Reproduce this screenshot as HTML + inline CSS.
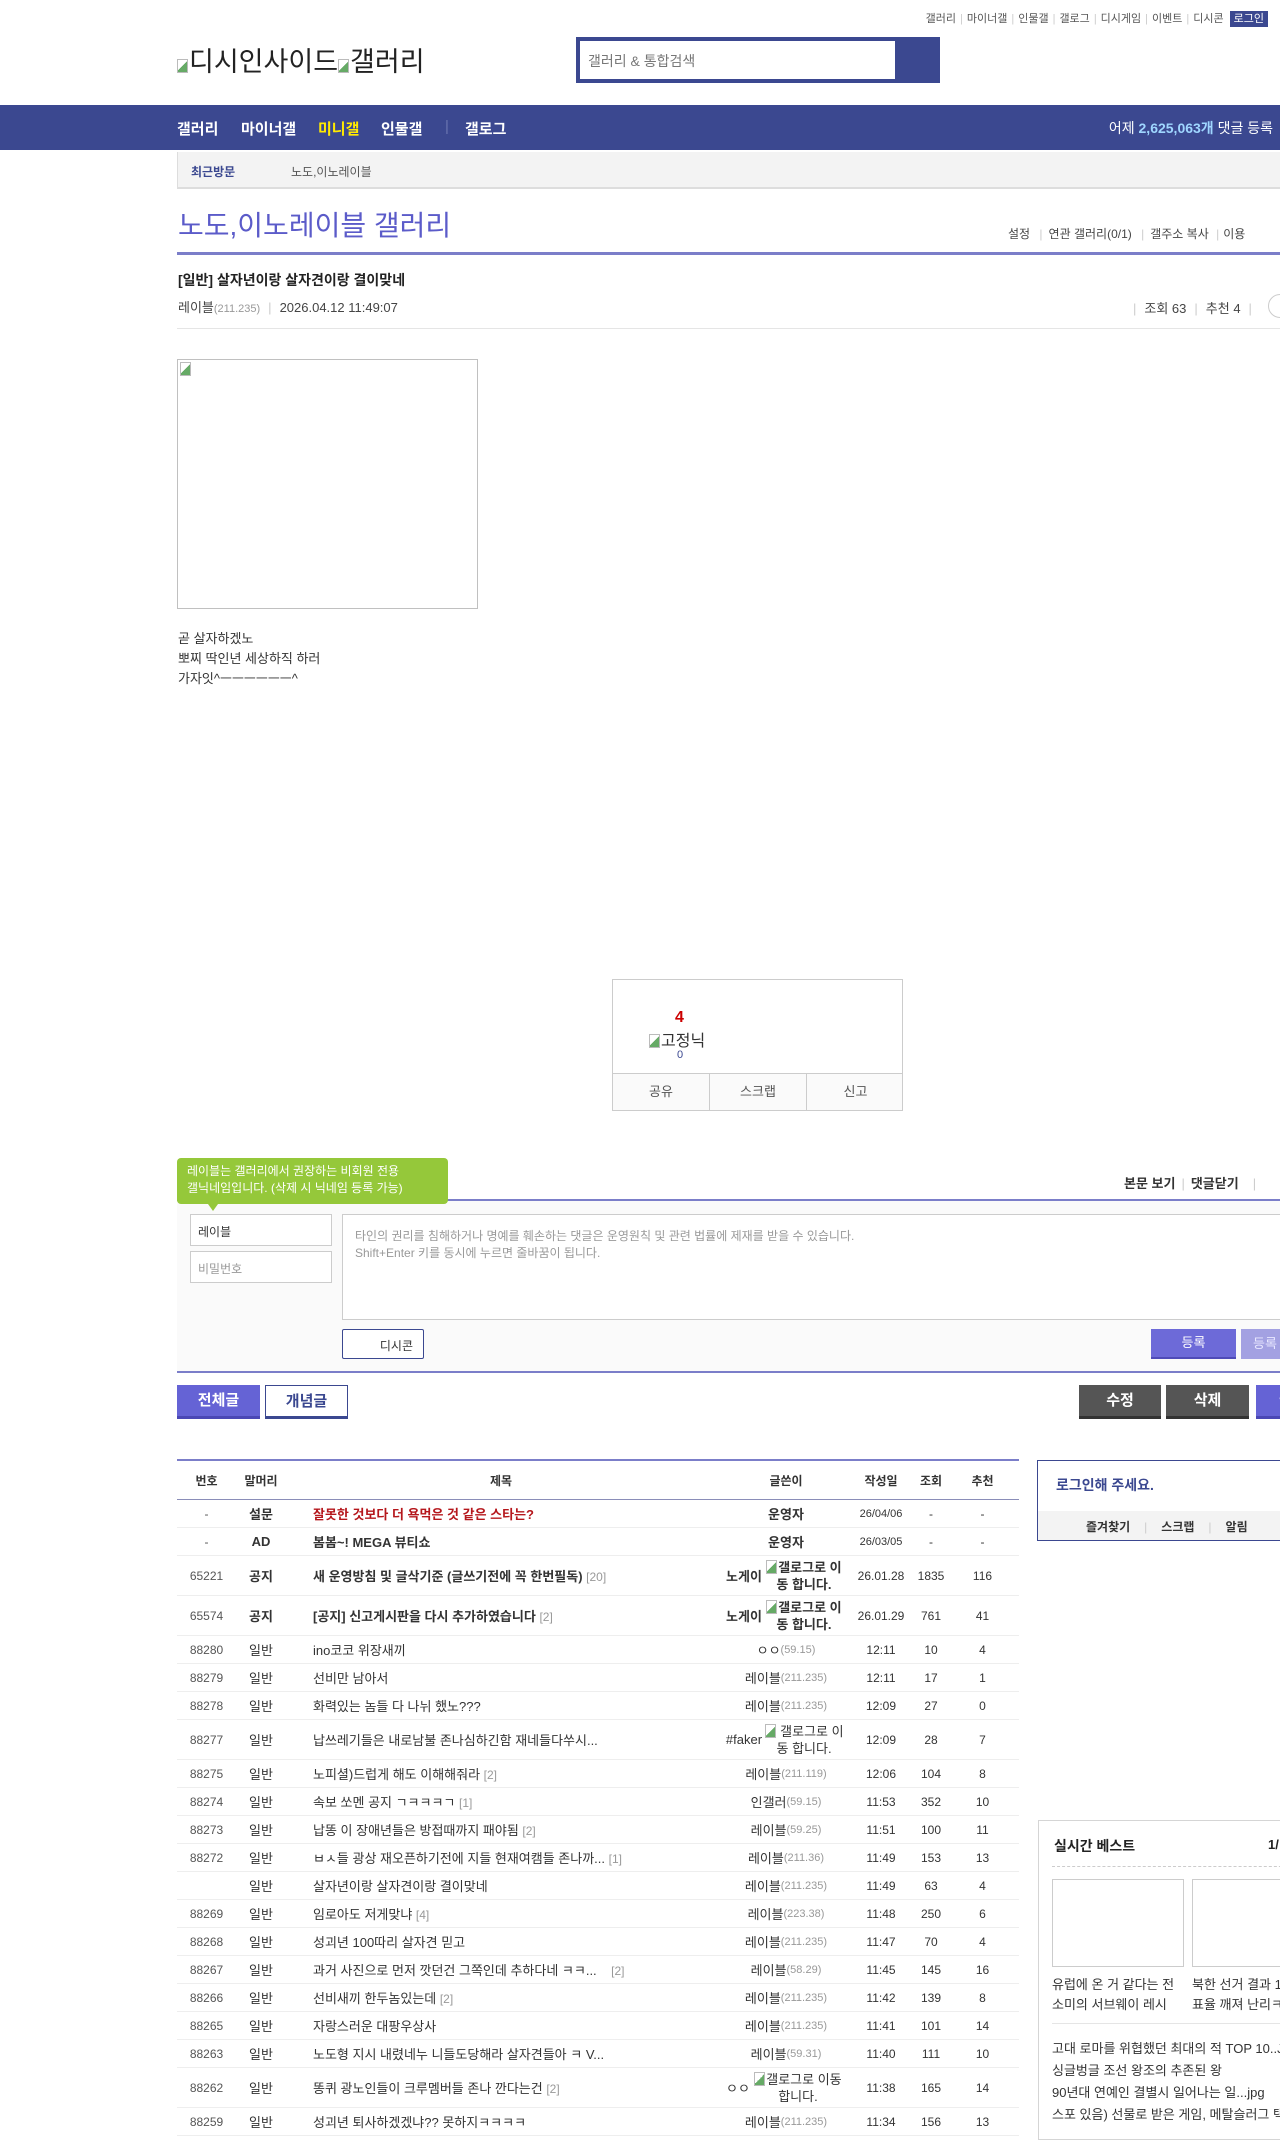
<!DOCTYPE html>
<html><head><meta charset="utf-8">
<style>
*{margin:0;padding:0;box-sizing:border-box}
body{width:1280px;height:2123px;overflow:hidden;position:relative;background:#fff;font-family:"Liberation Sans","Noto Sans CJK KR",sans-serif;color:#333;font-size:13px}
.a{position:absolute;white-space:nowrap}
.toplinks{top:10px;right:12px;font-size:11px;color:#555}
.toplinks span.s{color:#ccc;margin:0 4px}
.login{background:#3b4890;color:#fff;padding:2px 4px;margin-left:6px}
.nav{top:105px;left:0;width:1280px;height:45px;background:#3b4890}
.nav .i{position:absolute;top:13px;color:#fff;font-weight:bold;font-size:15px}
.recent{top:152px;left:177px;width:1110px;height:37px;background:#f3f3f3;border-bottom:2px solid #ddd;border-left:1px solid #ddd}
.bi{display:inline-block;width:11px;height:14px;border:1px solid #bbb;background:linear-gradient(135deg,#fff 50%,#6a6 50%);vertical-align:-2px;margin-right:1px}
.row{position:absolute;left:177px;width:842px;border-bottom:1px solid #eee;display:flex;align-items:center;font-size:13px;color:#333}
.row div{text-align:center;white-space:nowrap}
.c1{width:59px;font-size:12px;color:#555}.c2{width:50px}.c3{width:430px;text-align:left!important;padding-left:27px;overflow:hidden}
.c4{width:140px;display:flex;justify-content:center;align-items:center}.c5{width:50px;font-size:12px}.c6{width:50px;font-size:12px}.c7{width:53px;font-size:12px}
.ip{color:#999;font-size:11px}
.rc{color:#999;font-size:12px}
.gl{display:inline-block;white-space:normal!important;width:84px;line-height:17px;font-size:13px;text-align:center}
.btn{position:absolute;height:34px;line-height:32px;text-align:center;font-size:15px;font-weight:bold}
</style></head><body>

<div class="a toplinks">갤러리<span class="s">|</span>마이너갤<span class="s">|</span>인물갤<span class="s">|</span>갤로그<span class="s">|</span>디시게임<span class="s">|</span>이벤트<span class="s">|</span>디시콘<span class="login">로그인</span></div>
<div class="a" style="left:177px;top:40px;font-size:27px;color:#222"><span class="bi"></span>디시인사이드<span class="bi"></span>갤러리</div>
<div class="a" style="left:576px;top:37px;width:364px;height:46px;background:#3b4890"></div>
<div class="a" style="left:580px;top:41px;width:315px;height:38px;background:#fff;font-size:14px;color:#777;padding:10px 8px">갤러리 &amp; 통합검색</div>

<div class="a nav">
<span class="i" style="left:177px">갤러리</span>
<span class="i" style="left:241px">마이너갤</span>
<span class="i" style="left:318px;color:#ffea00">미니갤</span>
<span class="i" style="left:381px">인물갤</span>
<span class="i" style="left:445px;color:#6a75b0;font-weight:normal">|</span>
<span class="i" style="left:465px">갤로그</span>
<span class="i" style="right:7px;font-weight:normal;font-size:14px">어제 <b style="color:#9fd6ff">2,625,063개</b> 댓글 등록</span>
</div>
<div class="a recent">
<span class="a" style="left:13px;top:11px;font-size:12px;color:#3b4890;font-weight:bold">최근방문</span>
<span class="a" style="left:113px;top:11px;font-size:12px;color:#555">노도,이노레이블</span>
</div>

<div class="a" style="left:178px;top:204px;font-size:28px;color:#5b5bc9">노도,이노레이블 갤러리</div>
<div class="a" style="left:1008px;top:225px;font-size:12px;color:#444">설정 <span style="color:#ccc;margin:0 6px">|</span>연관 갤러리(0/1) <span style="color:#ccc;margin:0 6px">|</span>갤주소 복사 <span style="color:#ccc;margin:0 4px">|</span>이용</div>
<div class="a" style="left:177px;top:252px;width:1110px;height:3px;background:#7b7ec9"></div>

<div class="a" style="left:178px;top:270px;font-size:14px;font-weight:bold;color:#222">[일반] 살자년이랑 살자견이랑 결이맞네</div>
<div class="a" style="left:178px;top:297px;font-size:13px;color:#444">레이블<span class="ip">(211.235)</span><span style="color:#ccc;margin:0 8px">|</span>2026.04.12 11:49:07</div>
<div class="a" style="left:1133px;top:298px;font-size:13px;color:#444"><span style="color:#ccc;margin-right:8px">|</span>조회 63<span style="color:#ccc;margin:0 8px">|</span>추천 4<span style="color:#ccc;margin-left:8px">|</span></div>
<div class="a" style="left:1268px;top:294px;width:24px;height:24px;border:1px solid #ccc;border-radius:12px"></div>
<div class="a" style="left:177px;top:328px;width:1110px;height:1px;background:#e5e5e5"></div>

<div class="a" style="left:177px;top:359px;width:301px;height:250px;border:1px solid #c0c0c0"><span class="bi" style="position:absolute;left:2px;top:2px"></span></div>
<div class="a" style="left:178px;top:629px;font-size:13px;line-height:20px;color:#333">곧 살자하겠노<br>뽀찌 딱인년 세상하직 하러<br>가자잇^ㅡㅡㅡㅡㅡㅡ^</div>

<div class="a" style="left:612px;top:979px;width:291px;height:132px;border:1px solid #ccc"></div>
<div class="a" style="left:612px;top:1073px;width:291px;height:38px;border:1px solid #ccc;background:#fafafa;font-size:13px;color:#555">
<span class="a" style="left:0;top:0;width:97px;height:36px;border-right:1px solid #ccc;text-align:center;line-height:36px">공유</span>
<span class="a" style="left:97px;top:0;width:97px;height:36px;border-right:1px solid #ccc;text-align:center;line-height:36px">스크랩</span>
<span class="a" style="left:194px;top:0;width:97px;text-align:center;line-height:36px">신고</span></div>
<div class="a" style="left:675px;top:1009px;font-size:16px;font-weight:bold;color:#c00">4</div>
<div class="a" style="left:649px;top:1027px;font-size:16px;color:#333"><span class="bi"></span>고정닉</div>
<div class="a" style="left:677px;top:1049px;font-size:11px;color:#3b4890">0</div>

<div class="a" style="left:297px;top:1168px;font-size:16px;font-weight:bold;color:#333">전체 댓글 0개 등록순</div>
<div class="a" style="left:1124px;top:1173px;font-size:13px;font-weight:bold;color:#333">본문 보기<span style="color:#ccc;margin:0 6px;font-weight:normal">|</span>댓글닫기<span style="color:#ccc;margin-left:14px;font-weight:normal">|</span></div>
<div class="a" style="left:177px;top:1199px;width:1110px;height:2px;background:#7b7ec9"></div>
<div class="a" style="left:177px;top:1201px;width:1110px;height:170px;background:#fafafa"></div>
<div class="a" style="left:177px;top:1158px;width:271px;height:46px;background:#95c83a;border-radius:4px;color:#fff;font-size:12px;line-height:17px;padding:5px 10px">레이블는 갤러리에서 권장하는 비회원 전용<br>갤닉네임입니다. (삭제 시 닉네임 등록 가능)</div>
<div class="a" style="left:208px;top:1204px;width:0;height:0;border-left:5px solid transparent;border-right:5px solid transparent;border-top:7px solid #95c83a"></div>
<div class="a" style="left:190px;top:1214px;width:142px;height:32px;border:1px solid #ccc;background:#fff;font-size:12px;color:#333;padding:8px 7px">레이블</div>
<div class="a" style="left:190px;top:1251px;width:142px;height:32px;border:1px solid #ccc;background:#fff;font-size:12px;color:#999;padding:8px 7px">비밀번호</div>
<div class="a" style="left:342px;top:1214px;width:950px;height:106px;border:1px solid #ccc;background:#fff;font-size:12px;color:#999;line-height:17px;padding:13px 12px">타인의 권리를 침해하거나 명예를 훼손하는 댓글은 운영원칙 및 관련 법률에 제재를 받을 수 있습니다.<br>Shift+Enter 키를 동시에 누르면 줄바꿈이 됩니다.</div>
<div class="a" style="left:342px;top:1329px;width:82px;height:30px;border:1px solid #3b4890;background:#fff;font-size:12px;color:#333;text-align:right;padding:7px 10px;border-radius:2px">디시콘</div>
<div class="a" style="left:1151px;top:1329px;width:85px;height:30px;background:#6d6ad8;border-bottom:2px solid #4f4bb8;color:#fff;font-size:13px;text-align:center;line-height:28px">등록</div>
<div class="a" style="left:1241px;top:1329px;width:60px;height:30px;background:#a3a1e2;color:#e8e8ff;font-size:13px;padding-left:12px;line-height:29px">등록</div>
<div class="a" style="left:177px;top:1371px;width:1110px;height:2px;background:#7b7ec9"></div>

<div class="btn" style="left:177px;top:1385px;width:83px;background:#6563d5;color:#fff;border-bottom:3px solid #4a47b5">전체글</div>
<div class="btn" style="left:265px;top:1385px;width:83px;background:#fff;color:#3b4890;border:1px solid #3b4890;border-bottom:3px solid #3b4890">개념글</div>
<div class="btn" style="left:1079px;top:1385px;width:82px;background:#555;color:#fff;border-bottom:3px solid #333">수정</div>
<div class="btn" style="left:1166px;top:1385px;width:83px;background:#555;color:#fff;border-bottom:3px solid #333">삭제</div>
<div class="btn" style="left:1256px;top:1385px;width:60px;background:#6563d5;color:#fff;border-bottom:3px solid #4a47b5">글</div>

<div class="a" style="left:177px;top:1459px;width:842px;height:2px;background:#7b7ec9"></div>
<div class="row" style="top:1461px;height:39px;border-bottom:1px solid #8a8db8;font-weight:bold;font-size:12px"><div class="c1" style="color:#333">번호</div><div class="c2">말머리</div><div class="c3" style="text-align:center!important;padding-left:0">제목</div><div class="c4">글쓴이</div><div class="c5">작성일</div><div class="c6">조회</div><div class="c7">추천</div></div>

<div class="row" style="top:1500px;height:28px"><div class="c1">-</div><div class="c2"><b>설문</b></div><div class="c3"><b style="color:#b5171c">잘못한 것보다 더 욕먹은 것 같은 스타는?</b></div><div class="c4"><b>운영자</b></div><div class="c5" style="font-size:11px">26/04/06</div><div class="c6">-</div><div class="c7">-</div></div>
<div class="row" style="top:1528px;height:28px"><div class="c1">-</div><div class="c2"><b>AD</b></div><div class="c3"><b>봄봄~! MEGA 뷰티쇼</b></div><div class="c4"><b>운영자</b></div><div class="c5" style="font-size:11px">26/03/05</div><div class="c6">-</div><div class="c7">-</div></div>
<div class="row" style="top:1556px;height:40px"><div class="c1">65221</div><div class="c2"><b>공지</b></div><div class="c3"><b>새 운영방침 및 글삭기준 (글쓰기전에 꼭 한번필독)</b> <span class="rc">[20]</span></div><div class="c4"><b>노게이</b><span class="gl"><b><span class="bi"></span>갤로그로 이동 합니다.</b></span></div><div class="c5">26.01.28</div><div class="c6">1835</div><div class="c7">116</div></div>
<div class="row" style="top:1596px;height:40px"><div class="c1">65574</div><div class="c2"><b>공지</b></div><div class="c3"><b>[공지] 신고게시판을 다시 추가하였습니다</b> <span class="rc">[2]</span></div><div class="c4"><b>노게이</b><span class="gl"><b><span class="bi"></span>갤로그로 이동 합니다.</b></span></div><div class="c5">26.01.29</div><div class="c6">761</div><div class="c7">41</div></div>
<div class="row" style="top:1636px;height:28px"><div class="c1">88280</div><div class="c2">일반</div><div class="c3">ino코코 위장새끼</div><div class="c4">ㅇㅇ <span class="ip">(59.15)</span></div><div class="c5">12:11</div><div class="c6">10</div><div class="c7">4</div></div>
<div class="row" style="top:1664px;height:28px"><div class="c1">88279</div><div class="c2">일반</div><div class="c3">선비만 남아서</div><div class="c4">레이블 <span class="ip">(211.235)</span></div><div class="c5">12:11</div><div class="c6">17</div><div class="c7">1</div></div>
<div class="row" style="top:1692px;height:28px"><div class="c1">88278</div><div class="c2">일반</div><div class="c3">화력있는 놈들 다 나뉘 했노???</div><div class="c4">레이블 <span class="ip">(211.235)</span></div><div class="c5">12:09</div><div class="c6">27</div><div class="c7">0</div></div>
<div class="row" style="top:1720px;height:40px"><div class="c1">88277</div><div class="c2">일반</div><div class="c3">납쓰레기들은 내로남불 존나심하긴함 재네들다쑤시...</div><div class="c4">#faker<span class="gl"><span class="bi"></span> 갤로그로 이동 합니다.</span></div><div class="c5">12:09</div><div class="c6">28</div><div class="c7">7</div></div>
<div class="row" style="top:1760px;height:28px"><div class="c1">88275</div><div class="c2">일반</div><div class="c3">노피셜)드럽게 해도 이해해줘라 <span class="rc">[2]</span></div><div class="c4">레이블 <span class="ip">(211.119)</span></div><div class="c5">12:06</div><div class="c6">104</div><div class="c7">8</div></div>
<div class="row" style="top:1788px;height:28px"><div class="c1">88274</div><div class="c2">일반</div><div class="c3">속보 쏘멘 공지 ㄱㅋㅋㅋㄱ <span class="rc">[1]</span></div><div class="c4">인갤러 <span class="ip">(59.15)</span></div><div class="c5">11:53</div><div class="c6">352</div><div class="c7">10</div></div>
<div class="row" style="top:1816px;height:28px"><div class="c1">88273</div><div class="c2">일반</div><div class="c3">납똥 이 장애년들은 방접때까지 패야됨 <span class="rc">[2]</span></div><div class="c4">레이블 <span class="ip">(59.25)</span></div><div class="c5">11:51</div><div class="c6">100</div><div class="c7">11</div></div>
<div class="row" style="top:1844px;height:28px"><div class="c1">88272</div><div class="c2">일반</div><div class="c3">ㅂㅅ들 광상 재오픈하기전에 지들 현재여캠들 존나까... <span class="rc">[1]</span></div><div class="c4">레이블 <span class="ip">(211.36)</span></div><div class="c5">11:49</div><div class="c6">153</div><div class="c7">13</div></div>
<div class="row" style="top:1872px;height:28px"><div class="c1"></div><div class="c2">일반</div><div class="c3">살자년이랑 살자견이랑 결이맞네</div><div class="c4">레이블 <span class="ip">(211.235)</span></div><div class="c5">11:49</div><div class="c6">63</div><div class="c7">4</div></div>
<div class="row" style="top:1900px;height:28px"><div class="c1">88269</div><div class="c2">일반</div><div class="c3">임로아도 저게맞냐 <span class="rc">[4]</span></div><div class="c4">레이블 <span class="ip">(223.38)</span></div><div class="c5">11:48</div><div class="c6">250</div><div class="c7">6</div></div>
<div class="row" style="top:1928px;height:28px"><div class="c1">88268</div><div class="c2">일반</div><div class="c3">성괴년 100따리 살자견 믿고</div><div class="c4">레이블 <span class="ip">(211.235)</span></div><div class="c5">11:47</div><div class="c6">70</div><div class="c7">4</div></div>
<div class="row" style="top:1956px;height:28px"><div class="c1">88267</div><div class="c2">일반</div><div class="c3">과거 사진으로 먼저 깟던건 그쪽인데 추하다네 ㅋㅋ... &nbsp;&nbsp;&nbsp;<span class="rc">[2]</span></div><div class="c4">레이블 <span class="ip">(58.29)</span></div><div class="c5">11:45</div><div class="c6">145</div><div class="c7">16</div></div>
<div class="row" style="top:1984px;height:28px"><div class="c1">88266</div><div class="c2">일반</div><div class="c3">선비새끼 한두놈있는데 <span class="rc">[2]</span></div><div class="c4">레이블 <span class="ip">(211.235)</span></div><div class="c5">11:42</div><div class="c6">139</div><div class="c7">8</div></div>
<div class="row" style="top:2012px;height:28px"><div class="c1">88265</div><div class="c2">일반</div><div class="c3">자랑스러운 대팡우상사</div><div class="c4">레이블 <span class="ip">(211.235)</span></div><div class="c5">11:41</div><div class="c6">101</div><div class="c7">14</div></div>
<div class="row" style="top:2040px;height:28px"><div class="c1">88263</div><div class="c2">일반</div><div class="c3">노도형 지시 내렸네누 니들도당해라 살자견들아 ㅋ V...</div><div class="c4">레이블 <span class="ip">(59.31)</span></div><div class="c5">11:40</div><div class="c6">111</div><div class="c7">10</div></div>
<div class="row" style="top:2068px;height:40px"><div class="c1">88262</div><div class="c2">일반</div><div class="c3">똥퀴 광노인들이 크루멤버들 존나 깐다는건 <span class="rc">[2]</span></div><div class="c4">ㅇㅇ<span class="gl" style="width:96px"><span class="bi"></span>갤로그로 이동합니다.</span></div><div class="c5">11:38</div><div class="c6">165</div><div class="c7">14</div></div>
<div class="row" style="top:2108px;height:28px"><div class="c1">88259</div><div class="c2">일반</div><div class="c3">성괴년 퇴사하겠겠냐?? 못하지ㅋㅋㅋㅋ</div><div class="c4">레이블 <span class="ip">(211.235)</span></div><div class="c5">11:34</div><div class="c6">156</div><div class="c7">13</div></div>

<div class="a" style="left:1037px;top:1460px;width:260px;height:81px;border:1px solid #3b4890"></div>
<div class="a" style="left:1038px;top:1511px;width:260px;height:29px;background:#f3f3f3"></div>
<div class="a" style="left:1056px;top:1475px;font-size:14px;font-weight:bold;color:#3b4890">로그인해 주세요.</div>
<div class="a" style="left:1086px;top:1518px;font-size:12px;font-weight:bold;color:#333">즐겨찾기<span style="color:#ccc;margin:0 14px;font-weight:normal">|</span>스크랩<span style="color:#ccc;margin:0 14px;font-weight:normal">|</span>알림</div>

<div class="a" style="left:1038px;top:1820px;width:260px;height:320px;border:1px solid #d5d5d5"></div>
<div class="a" style="left:1054px;top:1836px;font-size:14px;font-weight:bold;color:#222">실시간 베스트</div>
<div class="a" style="left:1268px;top:1837px;font-size:13px;font-weight:bold;color:#222">1/</div>
<div class="a" style="left:1052px;top:1866px;width:240px;border-top:1px dashed #ccc"></div>
<div class="a" style="left:1052px;top:1879px;width:132px;height:88px;border:1px solid #ccc"></div>
<div class="a" style="left:1192px;top:1879px;width:120px;height:88px;border:1px solid #ccc"></div>
<div class="a" style="left:1052px;top:1975px;font-size:13px;line-height:20px;color:#333">유럽에 온 거 같다는 전<br>소미의 서브웨이 레시</div>
<div class="a" style="left:1192px;top:1975px;font-size:13px;line-height:20px;color:#333">북한 선거 결과 1<br>표율 깨져 난리ㅋ</div>
<div class="a" style="left:1052px;top:2023px;width:240px;border-top:1px solid #e5e5e5"></div>
<div class="a" style="left:1052px;top:2038px;font-size:13px;line-height:22px;color:#333">고대 로마를 위협했던 최대의 적 TOP 10..JP<br>싱글벙글 조선 왕조의 추존된 왕<br>90년대 연예인 결별시 일어나는 일...jpg<br>스포 있음) 선물로 받은 게임, 메탈슬러그 택</div>
</body></html>
